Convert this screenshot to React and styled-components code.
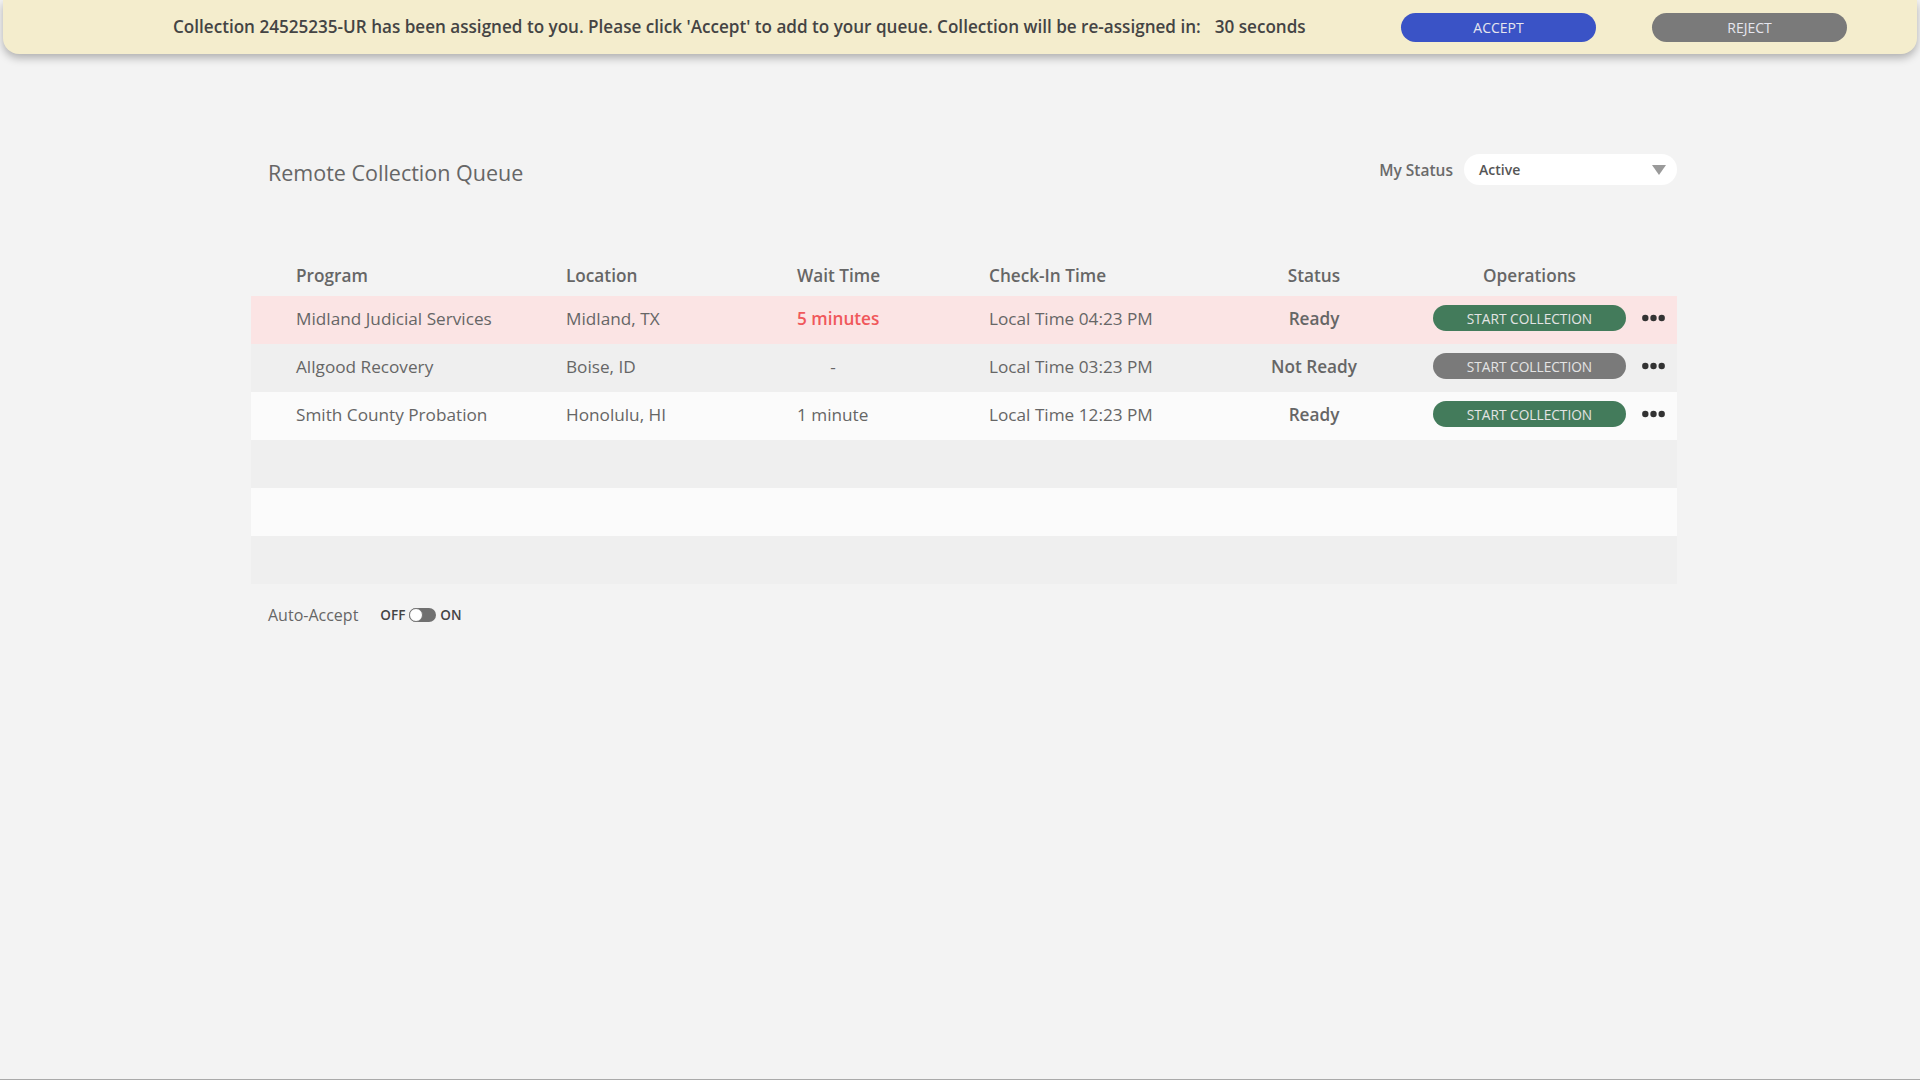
import React from "react";
import styled, { createGlobalStyle } from "styled-components";

const Global = createGlobalStyle`
  html, body { margin: 0; padding: 0; background: #f3f3f3; }
  body { font-family: "Open Sans", "Noto Sans", Arial, sans-serif; }
  * { box-sizing: border-box; }
`;

const Page = styled.div`
  height: 1080px;
  border-bottom: 1px solid #a9a9a9;
  background: #f3f3f3;
  overflow: hidden;
`;

const Banner = styled.div`
  height: 54px;
  margin: 0 3px;
  background: #f4edcd;
  border-radius: 0 0 16px 16px;
  box-shadow: 0 4px 8px rgba(0, 0, 0, 0.28);
  display: flex;
  align-items: center;
  padding: 0 70px 0 170px;
`;

const Message = styled.div`
  font-size: 17.1px;
  font-weight: 600;
  color: #444;
  white-space: nowrap;
  display: flex;
  gap: 14px;
  margin-top: -2px;
`;

const BannerButtons = styled.div`
  margin-left: auto;
  display: flex;
  gap: 56px;
  margin-top: 0;
`;

const PillButton = styled.button`
  width: 195px;
  height: 29px;
  border: none;
  border-radius: 15px;
  background: ${(p) => p.$bg};
  color: #e6e6ee;
  font-family: inherit;
  font-size: 14px;
  text-transform: uppercase;
  padding: 0;
  cursor: pointer;
`;

const Content = styled.div`
  margin-left: 251px;
  width: 1426px;
  padding-top: 100px;
`;

const TopBar = styled.div`
  display: flex;
  align-items: center;
  height: 31px;
`;

const Title = styled.h1`
  margin: 6px 0 0 17px;
  font-size: 21.5px;
  font-weight: 400;
  color: #666;
`;

const StatusGroup = styled.div`
  margin-left: auto;
  display: flex;
  align-items: center;
  gap: 11px;
`;

const StatusLabel = styled.span`
  font-size: 15.5px;
  font-weight: 600;
  color: #6a6a6a;
`;

const Select = styled.div`
  width: 213px;
  height: 31px;
  background: #fff;
  border-radius: 16px;
  display: flex;
  align-items: center;
  padding: 0 11px 0 15px;
  font-size: 14px;
  font-weight: 600;
  color: #555;
  justify-content: space-between;
`;

const Table = styled.div`
  margin-top: 69px;
`;

const Row = styled.div`
  display: grid;
  grid-template-columns: 315px 182px 180px 286px 200px 1fr;
  align-items: center;
  height: ${(p) => (p.$header ? "42px" : "48px")};
  padding-bottom: ${(p) => (p.$header ? "0" : "4px")};
  background: ${(p) => p.$bg || "transparent"};
  color: #666;
  font-size: 17.2px;
  font-weight: ${(p) => (p.$header ? 600 : 400)};
`;

const Cell = styled.div`
  white-space: nowrap;
  padding-left: ${(p) => p.$pl || 0}px;
  text-align: ${(p) => (p.$center ? "center" : "left")};
  font-weight: ${(p) => p.$weight || "inherit"};
  color: ${(p) => p.$color || "inherit"};
`;

const Placeholder = styled.span`
  display: inline-block;
  width: 72px;
  text-align: center;
`;

const OpsCell = styled.div`
  display: flex;
  align-items: center;
  padding-left: 19px;
  gap: 16px;
`;

const OpsHeader = styled.div`
  width: 193px;
  margin-left: 19px;
  text-align: center;
`;

const StartButton = styled.button`
  width: 193px;
  height: 26px;
  border: none;
  border-radius: 13px;
  background: ${(p) => (p.$ready ? "#437b5b" : "#7a7a7a")};
  color: #e4e4e4;
  font-family: inherit;
  font-size: 13.7px;
  padding: 0;
  cursor: pointer;
`;

const Footer = styled.div`
  display: flex;
  align-items: center;
  padding-left: 17px;
  margin-top: 21px;
  height: 20px;
`;

const FooterLabel = styled.span`
  font-size: 16px;
  color: #666;
  margin-right: 22px;
`;

const ToggleText = styled.span`
  font-size: 13.5px;
  font-weight: 600;
  color: #444;
`;

const Track = styled.span`
  position: relative;
  display: inline-block;
  width: 27px;
  height: 14px;
  background: #707070;
  border-radius: 7px;
  margin: 0 4px;
`;

const Knob = styled.span`
  position: absolute;
  left: 0;
  top: 0;
  width: 14px;
  height: 14px;
  border-radius: 50%;
  background: #fff;
  border: 1px solid #777;
`;

const Dots = () => (
  <svg width="23" height="8" viewBox="0 0 23 8">
    <circle cx="3.3" cy="4" r="3.2" fill="#333" />
    <circle cx="11.5" cy="4" r="3.2" fill="#333" />
    <circle cx="19.7" cy="4" r="3.2" fill="#333" />
  </svg>
);

const Caret = () => (
  <svg width="14" height="10" viewBox="0 0 14 10">
    <polygon points="0,0 14,0 7,10" fill="#9a9a9a" />
  </svg>
);

const rows = [
  { program: "Midland Judicial Services", location: "Midland, TX", wait: "5 minutes", urgent: true, checkin: "Local Time 04:23 PM", status: "Ready", ready: true, bg: "#fbe4e4" },
  { program: "Allgood Recovery", location: "Boise, ID", wait: null, checkin: "Local Time 03:23 PM", status: "Not Ready", ready: false, bg: "#efefef" },
  { program: "Smith County Probation", location: "Honolulu, HI", wait: "1 minute", checkin: "Local Time 12:23 PM", status: "Ready", ready: true, bg: "#fbfbfb" },
];

const emptyBgs = ["#efefef", "#fbfbfb", "#efefef"];

export default function App() {
  return (
    <Page>
      <Global />
      <Banner>
        <Message>
          <span>
            Collection 24525235-UR has been assigned to you. Please click 'Accept' to add to your queue. Collection will be re-assigned in:
          </span>
          <span>30 seconds</span>
        </Message>
        <BannerButtons>
          <PillButton $bg="#3a53c6">Accept</PillButton>
          <PillButton $bg="#7a7a7a">Reject</PillButton>
        </BannerButtons>
      </Banner>
      <Content>
        <TopBar>
          <Title>Remote Collection Queue</Title>
          <StatusGroup>
            <StatusLabel>My Status</StatusLabel>
            <Select>
              <span>Active</span>
              <Caret />
            </Select>
          </StatusGroup>
        </TopBar>
        <Table>
          <Row $header>
            <Cell $pl={45}>Program</Cell>
            <Cell>Location</Cell>
            <Cell $pl={49}>Wait Time</Cell>
            <Cell $pl={61}>Check-In Time</Cell>
            <Cell $center>Status</Cell>
            <OpsHeader>Operations</OpsHeader>
          </Row>
          {rows.map((r) => (
            <Row key={r.program} $bg={r.bg}>
              <Cell $pl={45}>{r.program}</Cell>
              <Cell>{r.location}</Cell>
              <Cell $pl={49} $weight={r.urgent ? 600 : undefined} $color={r.urgent ? "#f0585b" : undefined}>
                {r.wait || <Placeholder>-</Placeholder>}
              </Cell>
              <Cell $pl={61}>{r.checkin}</Cell>
              <Cell $center $weight={600}>{r.status}</Cell>
              <OpsCell>
                <StartButton $ready={r.ready}>START COLLECTION</StartButton>
                <Dots />
              </OpsCell>
            </Row>
          ))}
          {emptyBgs.map((bg, i) => (
            <Row key={i} $bg={bg} />
          ))}
        </Table>
        <Footer>
          <FooterLabel>Auto-Accept</FooterLabel>
          <ToggleText>OFF</ToggleText>
          <Track>
            <Knob />
          </Track>
          <ToggleText>ON</ToggleText>
        </Footer>
      </Content>
    </Page>
  );
}
